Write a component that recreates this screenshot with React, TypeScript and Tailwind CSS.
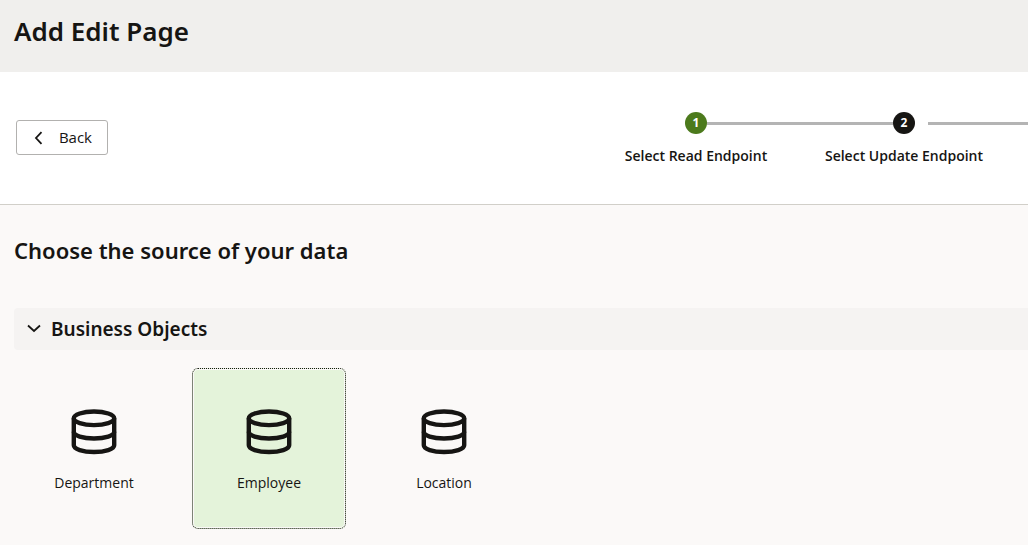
import { useState } from "react";

const objects = ["Department", "Employee", "Location"];

function DatabaseIcon() {
  return (
    <svg width="46" height="46" viewBox="0 0 46 46" fill="none" stroke="#161513" strokeWidth="4.4" aria-hidden="true">
      <ellipse cx="23" cy="9.3" rx="20.2" ry="6.8" />
      <path d="M2.8 9.3V36.3C2.8 40 11.8 43 23 43S43.2 40 43.2 36.3V9.3" />
      <path d="M2.8 22.8C2.8 26.6 11.8 29.5 23 29.5S43.2 26.6 43.2 22.8" />
    </svg>
  );
}

export default function App() {
  const [selected, setSelected] = useState("Employee");
  const [open, setOpen] = useState(true);

  return (
    <div className="flex min-h-screen flex-col overflow-hidden bg-[#fbf9f8] font-['Noto_Sans',sans-serif] text-[#161513]">
      <header className="h-18 bg-[#f0efed] px-3.5 pt-[13px]">
        <h1 className="text-[26px] leading-9 font-semibold">Add Edit Page</h1>
      </header>

      <div className="flex h-[133px] items-start border-b border-[#d1cfc9] bg-white pl-4 font-['Open_Sans',sans-serif]">
        <button type="button" className="mt-12 flex h-[35px] w-[92px] items-center justify-between rounded-[3px] border border-[#b2b1af] pr-[15px] pl-[17px] text-[15px]">
          <svg width="9" height="14" viewBox="0 0 9 14" fill="none" stroke="currentColor" strokeWidth="1.8" aria-hidden="true">
            <path d="M7.5 1.2L2 7l5.5 5.8" />
          </svg>
          Back
        </button>
        <ol className="mt-10 ml-auto flex w-[436px] text-sm font-semibold">
          <li className="flex w-52 flex-col items-center gap-3">
            <div className="flex w-full items-center">
              <span className="flex-1" />
              <span className="flex size-[22px] items-center justify-center rounded-full bg-[#4c7a1c] text-xs font-bold text-white">1</span>
              <span className="h-[3px] flex-1 bg-[#b4b4b4]" />
            </div>
            <span className="leading-5">Select Read Endpoint</span>
          </li>
          <li className="flex w-52 flex-col items-center gap-3" aria-current="step">
            <div className="flex w-full items-center">
              <span className="h-[3px] flex-1 bg-[#b4b4b4]" />
              <span className="flex size-[22px] items-center justify-center rounded-full bg-[#161513] text-xs font-bold text-white">2</span>
              <span className="flex-1">
                <span className="ml-[13px] block h-[3px] bg-[#b4b4b4]" />
              </span>
            </div>
            <span className="leading-5">Select Update Endpoint</span>
          </li>
          <li className="flex h-[22px] flex-1 items-center" aria-hidden="true">
            <span className="h-[3px] flex-1 bg-[#b4b4b4]" />
          </li>
        </ol>
      </div>

      <main className="flex flex-col pt-[27px] pl-3.5">
        <h2 className="text-[22px] leading-9 font-semibold">Choose the source of your data</h2>
        <section className="mt-10">
          <h3>
            <button
              type="button"
              aria-expanded={open}
              onClick={() => setOpen(!open)}
              className="flex h-[42px] w-full items-center gap-[9px] rounded-l-[4px] bg-[#f5f3f2] pl-3 text-[19px] font-semibold"
            >
              <svg width="16" height="10" viewBox="0 0 16 10" fill="none" stroke="currentColor" strokeWidth="1.8" aria-hidden="true">
                <path d="M2 1.5l6 5.5 6-5.5" />
              </svg>
              Business Objects
            </button>
          </h3>
          {open && (
            <div className="flex gap-[21px] pt-[18px] pl-[3px]">
              {objects.map((name) => (
                <button
                  key={name}
                  type="button"
                  aria-pressed={selected === name}
                  onClick={() => setSelected(name)}
                  className={
                    "flex h-[161px] w-[154px] flex-col items-center gap-[18px] rounded-md border border-dotted pt-10 " +
                    (selected === name ? "border-[#161513] bg-[#e4f3da] shadow-[inset_0_0_0_1px_#fbf9f8]" : "border-transparent")
                  }
                >
                  <DatabaseIcon />
                  <span className="font-['Open_Sans',sans-serif] text-sm leading-5">{name}</span>
                </button>
              ))}
            </div>
          )}
        </section>
      </main>
    </div>
  );
}
